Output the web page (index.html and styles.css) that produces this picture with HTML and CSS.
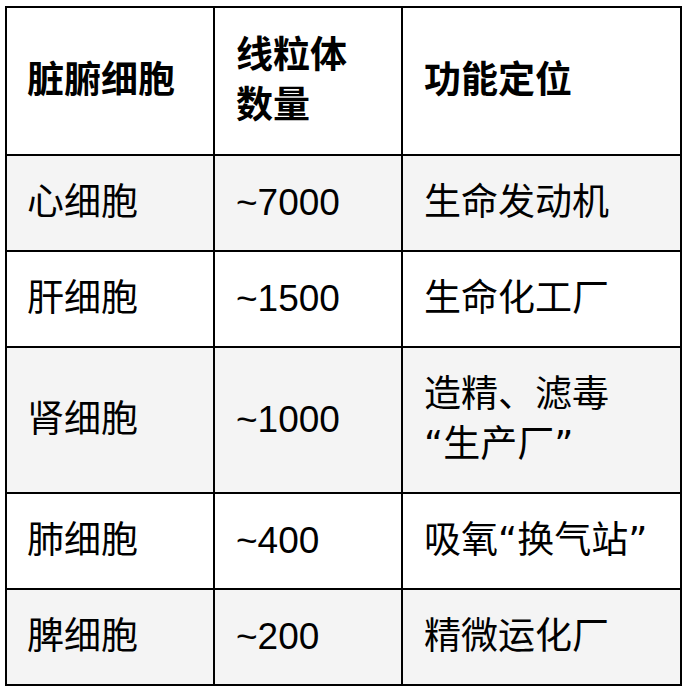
FILE: index.html
```html
<!DOCTYPE html>
<html lang="zh-CN">
<head>
<meta charset="utf-8">
<title>线粒体数量</title>
<link rel="stylesheet" href="styles.css">
</head>
<body>
<table class="cells">
  <colgroup>
    <col class="c1">
    <col class="c2">
    <col class="c3">
  </colgroup>
  <thead>
    <tr class="head">
      <th>脏腑细胞</th>
      <th>线粒体<br>数量</th>
      <th>功能定位</th>
    </tr>
  </thead>
  <tbody>
    <tr class="shade">
      <td>心细胞</td>
      <td class="num">~7000</td>
      <td>生命发动机</td>
    </tr>
    <tr>
      <td>肝细胞</td>
      <td class="num">~1500</td>
      <td>生命化工厂</td>
    </tr>
    <tr class="shade">
      <td>肾细胞</td>
      <td class="num">~1000</td>
      <td>造精、滤毒<br><span class="q">“</span>生产厂<span class="q">”</span></td>
    </tr>
    <tr>
      <td>肺细胞</td>
      <td class="num">~400</td>
      <td>吸氧<span class="q">“</span>换气站<span class="q">”</span></td>
    </tr>
    <tr class="shade">
      <td>脾细胞</td>
      <td class="num">~200</td>
      <td>精微运化厂</td>
    </tr>
  </tbody>
</table>
</body>
</html>
```

FILE: styles.css
```css
html, body {
  margin: 0;
  padding: 0;
  background: #ffffff;
}

body {
  padding: 6px 0 0 5px;
  font-family: "Liberation Sans", "Noto Sans CJK SC", sans-serif;
  color: #000000;
}

.cells {
  table-layout: fixed;
  width: 677px;
  border-collapse: separate;
  border-spacing: 2px;
  background: #000000;
}

.c1 { width: 206px; }
.c2 { width: 186px; }
.c3 { width: 277px; }

.cells th,
.cells td {
  box-sizing: border-box;
  padding: 22px 20px 22px 20px;
  font-size: 37px;
  line-height: 50px;
  text-align: left;
  vertical-align: middle;
  background: #ffffff;
  white-space: nowrap;
}

.cells th {
  font-weight: 700;
  padding-top: 23px;
  padding-bottom: 23px;
}

.cells td:nth-child(2),
.cells th:nth-child(2),
.cells td:nth-child(3),
.cells th:nth-child(3) {
  padding-left: 21px;
}

.cells tr.shade td {
  background: #f4f4f4;
}

.q {
  font-family: "DejaVu Sans", "Liberation Sans", sans-serif;
}
```
